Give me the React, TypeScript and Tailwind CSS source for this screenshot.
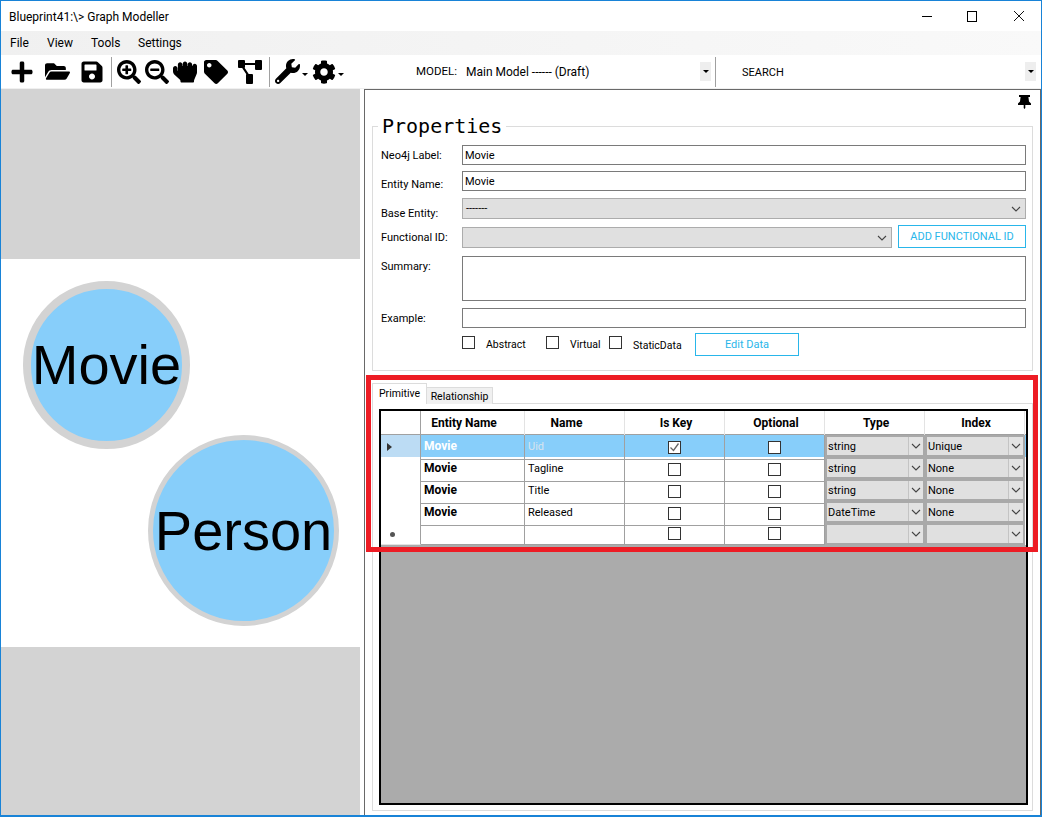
import React from "react";
import { FaPlus, FaFolderOpen, FaSave, FaSearchPlus, FaSearchMinus, FaHandRock, FaTag, FaWrench, FaCog } from "react-icons/fa";

const Chevron = ({ className = "" }: { className?: string }) => (
  <svg width="10" height="6" viewBox="0 0 10 6" className={className} fill="none" stroke="#444" strokeWidth="1.1">
    <path d="M1 1l4 4 4-4" />
  </svg>
);

const Caret = () => <span className="block w-0 h-0 border-l-[3px] border-r-[3px] border-t-[3px] border-l-transparent border-r-transparent border-t-black" />;

const Check = ({ checked = false }: { checked?: boolean }) => (
  <span className="flex items-center justify-center w-[13px] h-[13px] border border-[#333] bg-white">
    {checked && (
      <svg width="11" height="11" viewBox="0 0 11 11" fill="none" stroke="#666" strokeWidth="1.3">
        <path d="M1.5 5.5l3 3 5-7" />
      </svg>
    )}
  </span>
);

const Input = ({ value = "", className = "" }: { value?: string; className?: string }) => (
  <div className={`flex-1 border border-[#7a7a7a] bg-white pl-[2px] pt-[2px] leading-[15px] ${className}`}>{value}</div>
);

const Select = ({ value = "" }: { value?: string }) => (
  <div className="flex-1 h-[21px] flex items-center justify-between border border-[#acacac] bg-[#e0e0e0] pl-[3px] pr-[4px]">
    <span className="leading-[15px]">{value}</span>
    <Chevron />
  </div>
);

const Row = ({ label, children, className = "", labelClass = "" }: { label: string; children: React.ReactNode; className?: string; labelClass?: string }) => (
  <div className={`flex items-start ${className}`}>
    <div className={`w-[81px] shrink-0 h-[16px] leading-[16px] ${labelClass}`}>{label}</div>
    {children}
  </div>
);

const Combo = ({ value = "" }: { value?: string }) => (
  <div className="h-[22px] flex border-[2px] border-[#a9a9a9] bg-[#e0e0e0]">
    <div className="flex-1 pl-[1px] leading-[20px] text-[11px]">{value}</div>
    <div className="w-[15px] flex items-center justify-center border-l border-[#c4c4c4] bg-[#e3e3e3]"><Chevron /></div>
  </div>
);

const rows = [
  { e: "Movie", n: "Uid", key: true, t: "string", i: "Unique" },
  { e: "Movie", n: "Tagline", key: false, t: "string", i: "None" },
  { e: "Movie", n: "Title", key: false, t: "string", i: "None" },
  { e: "Movie", n: "Released", key: false, t: "DateTime", i: "None" },
  { e: "", n: "", key: false, t: "", i: "" },
];

const headers = [
  { h: "Entity Name", c: "pr-[17px]" },
  { h: "Name", c: "pr-[16px]" },
  { h: "Is Key", c: "pl-[3px]" },
  { h: "Optional", c: "pl-[3px]" },
  { h: "Type", c: "pl-[3px]" },
  { h: "Index", c: "pl-[3px]" },
];

const cols = "grid grid-cols-[40px_104px_100px_100px_100px_100px_100px]";

export default function App() {
  return (
    <div className="relative w-[1042px] h-[817px] flex flex-col overflow-hidden bg-white border-x border-t border-b-2 border-[#1883d7] text-[12px] text-black" style={{ fontFamily: 'Roboto, "Open Sans", sans-serif' }}>
      {/* Title bar */}
      <div className="h-[30px] flex items-center justify-between shrink-0">
        <div className="pl-[8px] pt-[1px]">Blueprint41:\&gt; Graph Modeller</div>
        <div className="flex items-center">
          <div className="w-[10px] h-[1px] bg-black mr-[35px]" />
          <div className="w-[10px] h-[11px] border border-black mr-[36px]" />
          <svg width="12" height="12" viewBox="0 0 12 12" className="mr-[16px]" stroke="#111" strokeWidth="1" fill="none"><path d="M1 1l10 10M11 1L1 11" /></svg>
        </div>
      </div>
      {/* Menu */}
      <div className="h-[24px] shrink-0 flex items-center bg-gradient-to-r from-[#f0f0f0] to-[#f9f9f9] pl-[9px]">
        <span className="w-[37px]">File</span>
        <span className="w-[44px]">View</span>
        <span className="w-[47px]">Tools</span>
        <span>Settings</span>
      </div>
      {/* Toolbar */}
      <div className="h-[34px] shrink-0 flex items-center border-b border-[#f0f0f0]">
        <FaPlus size={24} className="ml-[9px]" />
        <FaFolderOpen size={25} className="ml-[11px]" />
        <FaSave size={24} className="ml-[10px]" />
        <div className="w-px h-[30px] bg-[#a0a0a0] ml-[7px]" />
        <FaSearchPlus size={24} className="ml-[5px]" />
        <FaSearchMinus size={24} className="ml-[4px]" />
        <FaHandRock size={24} className="ml-[4px]" />
        <FaTag size={24} className="ml-[7px]" />
        <svg width="24" height="24" viewBox="0 0 24 24" className="ml-[10px]" fill="black">
          <rect x="0" y="0" width="7" height="8" rx="1" />
          <rect x="17" y="0" width="7" height="10" rx="1" />
          <rect x="8" y="14" width="7" height="10" rx="1" />
          <path d="M6 3h12v2H6zM3.5 7l6 9 1.7-1.2-6-9z" />
        </svg>
        <div className="w-px h-[30px] bg-[#a0a0a0] ml-[7px]" />
        <FaWrench size={25} className="ml-[5px]" />
        <span className="ml-[2px] mt-[6px]"><Caret /></span>
        <FaCog size={24} className="ml-[4px]" />
        <span className="ml-[2px] mt-[6px]"><Caret /></span>
        <span className="ml-[72px] w-[50px] text-[11.5px] mt-[1px]">MODEL:</span>
        <span className="w-[234px] mt-[1px]">Main Model ------ (Draft)</span>
        <div className="w-[11px] h-[19px] bg-[#eeeeee] flex items-center justify-center"><Caret /></div>
        <div className="w-px h-[30px] bg-[#a0a0a0] ml-[4px]" />
        <span className="ml-[26px] w-[283px] text-[11px] mt-[3px]">SEARCH</span>
        <div className="w-[11px] h-[19px] bg-[#eeeeee] flex items-center justify-center"><Caret /></div>
      </div>
      {/* Content */}
      <div className="flex-1 flex min-h-0">
        {/* Left canvas */}
        <div className="relative w-[359px] shrink-0 flex flex-col bg-white" style={{ fontFamily: '"Liberation Sans", Arial, sans-serif' }}>
          <div className="h-[170px] bg-[#d3d3d3]" />
          <div className="flex-1" />
          <div className="h-[168px] bg-[#d3d3d3]" />
          <div className="absolute left-[22px] top-[192px] w-[167px] h-[168px] rounded-full border-[8px] border-[#d3d3d3] bg-[#87cefa] flex items-center justify-center text-[56px] leading-none">Movie</div>
          <div className="absolute left-[147px] top-[346px] w-[191px] h-[191px] rounded-full border-[5px] border-[#d3d3d3] bg-[#87cefa] flex items-center justify-center text-[56px] leading-none">Person</div>
        </div>
        <div className="w-[4px] shrink-0" />
        {/* Right panel */}
        <div className="flex-1 min-w-0 flex flex-col border-l border-t border-r border-[#696969] pl-[7px] pr-[7px] relative">
          <div className="h-[26px] shrink-0 flex justify-end pt-[5px] pr-[1px]">
            <svg width="15" height="14" viewBox="0 0 15 14" fill="black">
              <path d="M2 0h11v2h-1.6l.6 4.5 2 2V10H8.3v3l-.8 1-.8-1v-3H1V8.5l2-2L3.6 2H2z" />
            </svg>
          </div>
          <fieldset className="shrink-0 border border-[#dcdcdc] pl-[8px] pr-[6px] h-[255px] text-[11px]">
            <legend className="-ml-[3px] px-[4px] text-[20px] leading-[20px]" style={{ fontFamily: '"DejaVu Sans Mono", monospace' }}>Properties</legend>
            <div className="flex flex-col pt-[9px]">
              <Row label="Neo4j Label:" className="h-[20px]" labelClass="pt-[3px]"><Input value="Movie" className="h-[20px]" /></Row>
              <Row label="Entity Name:" className="h-[20px] mt-[6px]" labelClass="pt-[6px]"><Input value="Movie" className="h-[20px]" /></Row>
              <Row label="Base Entity:" className="h-[21px] mt-[7px]" labelClass="pt-[8px]"><Select value="-------" /></Row>
              <div className="flex mt-[6px] h-[23px] items-end">
                <div className="w-[81px] shrink-0 h-[16px] leading-[16px] mb-[2px]">Functional ID:</div>
                <Select />
                <div className="ml-[6px] w-[128px] h-[23px] border border-[#29b6ea] text-[#29b6ea] flex items-center justify-center bg-white pt-[2px]">ADD FUNCTIONAL ID</div>
              </div>
              <Row label="Summary:" className="h-[45px] mt-[8px]" labelClass="pt-[3px]"><Input className="h-[45px]" /></Row>
              <Row label="Example:" className="h-[20px] mt-[7px]" labelClass="pt-[3px]"><Input className="h-[20px]" /></Row>
              <div className="flex items-center mt-[5px] h-[23px] pl-[81px] text-[10.5px]">
                <span className="-mt-[5px]"><Check /></span>
                <span className="ml-[11px] w-[60px] mt-[1px]">Abstract</span>
                <span className="-mt-[5px]"><Check /></span>
                <span className="ml-[11px] w-[39px] mt-[1px]">Virtual</span>
                <span className="-mt-[5px]"><Check /></span>
                <span className="ml-[11px] w-[62px] mt-[3px]">StaticData</span>
                <div className="w-[104px] h-[23px] border border-[#29b6ea] text-[#29b6ea] text-[11px] flex items-center justify-center pt-[2px]">Edit Data</div>
              </div>
            </div>
          </fieldset>
          {/* Tabs */}
          <div className="shrink-0 flex items-end h-[21px] mt-[12px] relative z-10 text-[10.5px]">
            <div className="w-[55px] h-[21px] border border-b-0 border-[#dcdcdc] bg-white text-center leading-[20px]">Primitive</div>
            <div className="w-[66px] h-[17px] border border-l-0 border-b-0 border-[#dcdcdc] bg-[#f0f0f0] text-center leading-[17px]">Relationship</div>
          </div>
          <div className="flex-1 min-h-0 border border-[#dcdcdc] -mt-px mb-[4px] pl-[6px] pr-[4px] pt-[5px] pb-[5px] flex">
            <div className="flex-1 border-2 border-black bg-[#ababab] overflow-hidden">
              <div className={`${cols} h-[24px] bg-white font-bold border-b border-[#a0a0a0] text-center`}>
                <div className="border-r border-[#a0a0a0]" />
                {headers.map(({ h, c }) => (
                  <div key={h} className={`border-r border-[#e3e3e3] leading-[24px] ${c}`}>{h}</div>
                ))}
              </div>
              {rows.map((r, idx) => {
                const sel = idx === 0;
                return (
                  <div key={idx} className={`${cols} h-[22px] ${sel ? "bg-[#87cefa]" : "bg-white"}`}>
                    <div className={`flex items-center border-r border-b border-r-[#a0a0a0] border-b-[#e3e3e3] ${sel ? "bg-[#bcdcf4]" : "bg-white"}`}>
                      {sel && <span className="ml-[6px] w-0 h-0 border-y-[4px] border-l-[5px] border-y-transparent border-l-[#333]" />}
                      {idx === 4 && <span className="ml-[9px] mt-[2px] w-[5px] h-[5px] rounded-full bg-[#555]" />}
                    </div>
                    <div className={`border-r border-b border-[#a0a0a0] pl-[3px] font-bold leading-[22px] ${sel ? "text-white" : ""}`}>{r.e}</div>
                    <div className={`border-r border-b border-[#a0a0a0] pl-[3px] text-[11px] leading-[24px] ${sel ? "text-[#d8e4ee]" : ""}`}>{r.n}</div>
                    <div className="border-r border-b border-[#a0a0a0] flex items-center justify-center"><Check checked={r.key} /></div>
                    <div className="border-r border-b border-[#a0a0a0] flex items-center justify-center"><Check /></div>
                    <Combo value={r.t} />
                    <Combo value={r.i} />
                  </div>
                );
              })}
            </div>
          </div>
        </div>
      </div>
      {/* Annotation */}
      <div className="absolute left-[365px] top-[374px] w-[672px] h-[177px] border-[5px] border-[#ed1c24] pointer-events-none" />
    </div>
  );
}
